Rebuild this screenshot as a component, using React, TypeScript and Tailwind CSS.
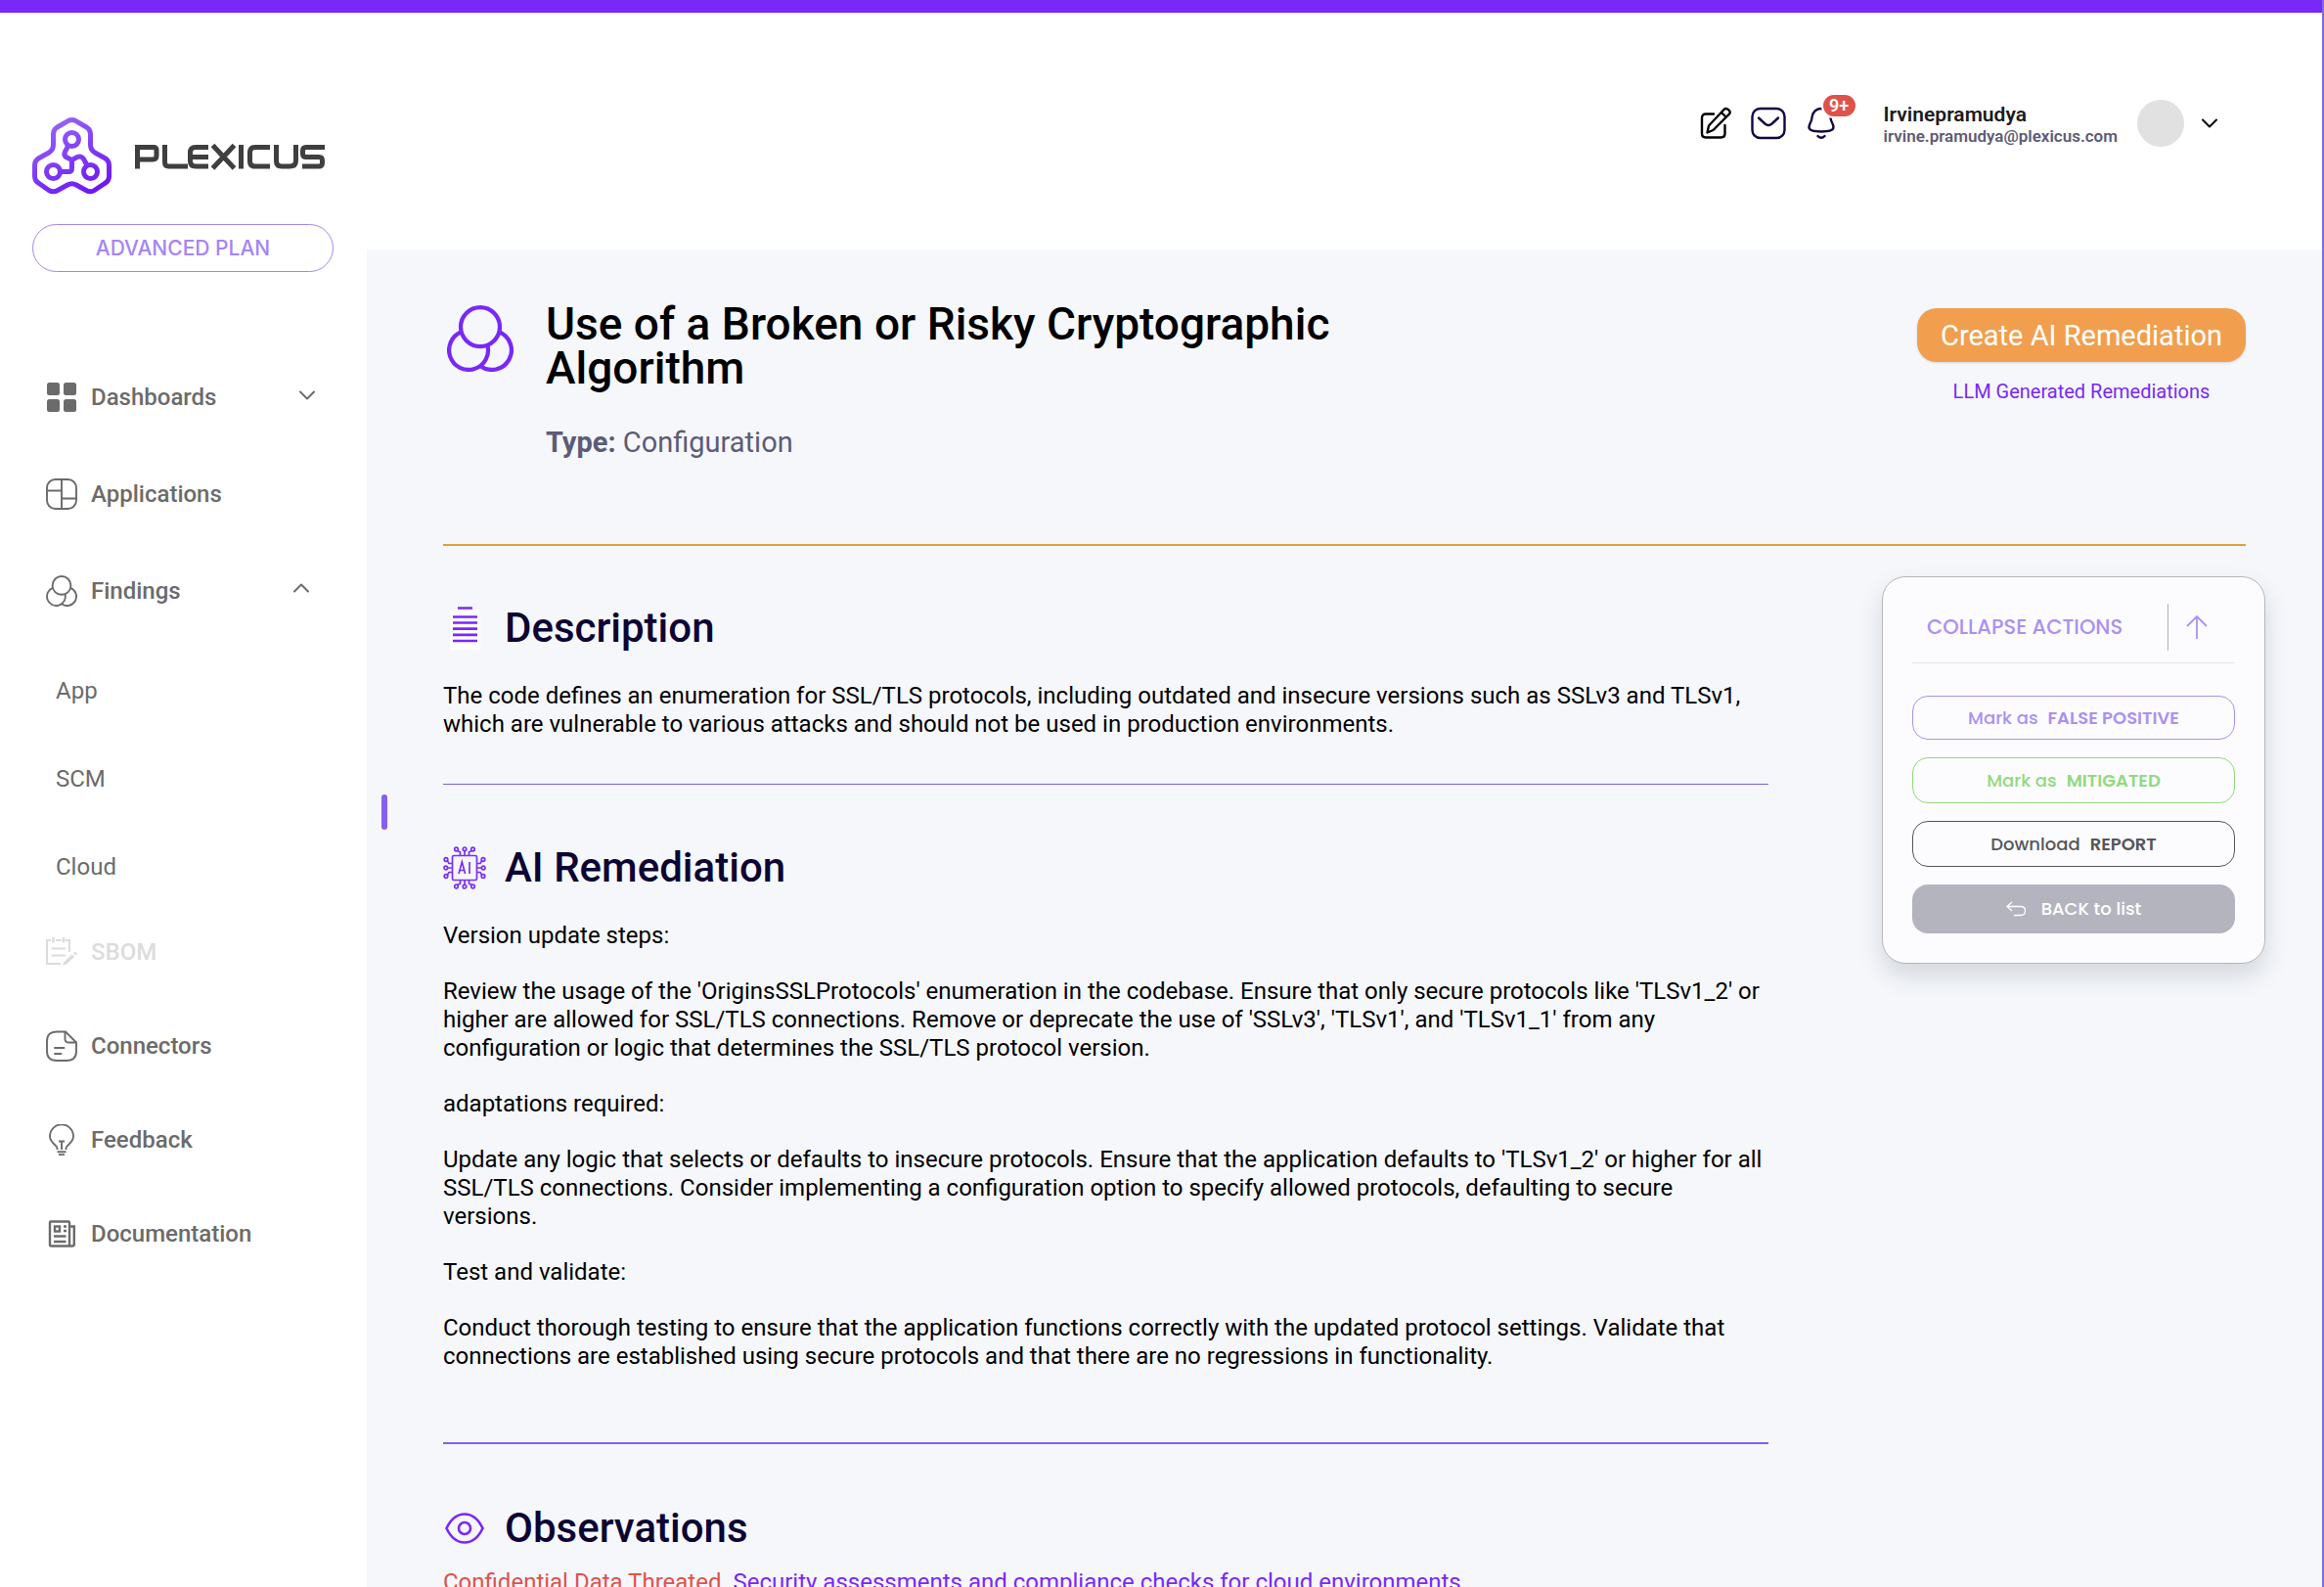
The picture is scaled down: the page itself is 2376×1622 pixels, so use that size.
import React from 'react';

const heading = 'text-[42px] leading-[50px] font-medium text-[#0d0433]';

function Rings({ className, width }: { className: string; width: number }) {
  return (
    <svg className={className} viewBox="0 0 32 32" fill="none" stroke="currentColor" strokeWidth={width}>
      <circle cx="16" cy="10.4" r="9.4" />
      <path d="M6.93 12.87A9.4 9.4 0 1 0 19.47 19.13" />
      <path d="M25.07 12.87A9.4 9.4 0 1 1 16 29.15" />
    </svg>
  );
}

function Logo() {
  return (
    <svg className="h-20 w-[302px]" viewBox="0 0 302 80" fill="none" role="img" aria-label="Plexicus">
      <defs>
        <linearGradient id="mark" x1="20" y1="0" x2="60" y2="80" gradientUnits="userSpaceOnUse">
          <stop offset="0" stopColor="#9a66f8" />
          <stop offset="0.6" stopColor="#7c35f6" />
          <stop offset="1" stopColor="#6f14f4" />
        </linearGradient>
      </defs>
      <g stroke="url(#mark)" strokeWidth="5" strokeLinejoin="round">
        <path d="M36.500 3.600Q40.500 1.500 44.500 3.600L55.500 10Q59.500 12.500 59.500 17V28Q59.500 33 64 36L74 41.500Q78.500 44 78.500 49V60Q78.500 65 74 67.500L63.500 74.500Q59.500 77 55 74.500L45 69Q40.500 66.500 36 69L26 74.500Q21.500 77 17 74.500L7 67.500Q2.500 65 2.500 60V49Q2.500 44 7 41.500L17 36Q21.500 33 21.500 28V17Q21.500 12.500 25.500 10Z" />
        <circle cx="40.500" cy="22.500" r="7" />
        <circle cx="21.500" cy="55.500" r="7" />
        <circle cx="59.500" cy="55.500" r="7" />
        <path d="M36.500 29.500L33.500 35Q31.500 39 35.500 41L40.500 43.500V52Q40.500 55.500 37 55.500H29M40.500 43.500L46 40.500Q50 39 52.500 42.500L56 49" />
      </g>
      <g stroke="#3f3f3f" strokeWidth="5">
        <path d="M107.500 52.500V30.500H124Q127 30.500 127 33.500V39Q127 43 123 43H107" />
        <path d="M134.500 28V46Q134.500 50 138.500 50H158" transform="translate(1 0)" />
        <path d="M180 30.500H167Q161.500 30.500 161.500 36V44.500Q161.500 50 167 50H180M162 40.500H180" />
        <path d="M184.500 28.500L206.500 52M206.500 28.500L184.500 52" />
        <path d="M213.500 28V52.500" />
        <path d="M243 30.500H228Q222.500 30.500 222.500 36V44.500Q222.500 50 228 50H243" />
        <path d="M249.500 28V44.500Q249.500 50 255 50H263Q269.500 50 269.500 44.500V28" />
        <path d="M299 30.500H280Q276.500 30.500 276.500 34V37Q276.500 40.500 280 40.500H293Q296.500 40.500 296.500 44V46.500Q296.500 50 293 50H276" />
      </g>
    </svg>
  );
}

const icon = 'size-8 shrink-0';

function GridIcon() {
  return (
    <svg className={icon} viewBox="0 0 32 32" fill="currentColor">
      <rect x="1" y="1" width="13" height="13" rx="2.500" />
      <rect x="18" y="1" width="13" height="13" rx="2.500" />
      <rect x="1" y="18" width="13" height="13" rx="2.500" />
      <rect x="18" y="18" width="13" height="13" rx="2.500" />
    </svg>
  );
}

function AppsIcon() {
  return (
    <svg className={icon} viewBox="0 0 32 32" fill="none" stroke="currentColor" strokeWidth="1.900">
      <rect x="1" y="1" width="30" height="30" rx="8.500" />
      <path d="M16 1V31M1 12.500H16M16 20.500H31" />
    </svg>
  );
}

function SbomIcon() {
  return (
    <svg className={icon} viewBox="0 0 32 32" fill="none" stroke="currentColor" strokeWidth="2">
      <path d="M5 4H1V28H15M10 4H16M20 4H24V16" />
      <path d="M7.500 1V6.500M18 1V6.500" strokeWidth="2.600" />
      <path d="M5.500 12.500H20M5.500 19.500H20" />
      <path d="M17 30L18.500 26L26.500 18.500L29 21L21 28.500Z" fill="currentColor" stroke="none" />
      <path d="M28 17L29.500 15.500L32 18L30.500 19.500Z" fill="currentColor" stroke="none" />
    </svg>
  );
}

function FileIcon() {
  return (
    <svg className={icon} viewBox="0 0 32 32" fill="none" stroke="currentColor" strokeWidth="1.900" strokeLinecap="round" strokeLinejoin="round">
      <path d="M20 1.500H11Q1 1.500 1 11V21.500Q1 31 11 31H21Q31 31 31 21.500V12.500Z" />
      <path d="M19.500 2V9Q19.500 12.500 23 12.500H30.500M9 18H18.500M9 24H15.500" />
    </svg>
  );
}

function BulbIcon() {
  return (
    <svg className={icon} viewBox="0 0 32 32" fill="none" stroke="currentColor" strokeWidth="1.900">
      <path d="M11.500 26V24.500C11.500 21 4 19.500 4 12.300A12 12 0 0 1 28 12.300C28 19.500 20.500 21 20.500 24.500V26" />
      <path d="M13 17.500H19M16 17.500V26M11.500 28.200H20.500M13 31.200H19" />
    </svg>
  );
}

function NewsIcon() {
  return (
    <svg className={icon} viewBox="0 0 32 32" fill="none" stroke="currentColor" strokeWidth="2.400">
      <path d="M24 28.500V4.500Q24 3.500 23 3.500H5Q4 3.500 4 4.500V27Q4 28.500 5.500 28.500H27Q28.800 28.500 28.800 27V8.500H24.500" />
      <rect x="9" y="8.500" width="5" height="5" />
      <path d="M18 8.500H21M18 13H21M8 18.500H20.500M8 24H20.500" />
    </svg>
  );
}

function Chevron({ up, className }: { up?: boolean; className: string }) {
  return (
    <svg className={className} viewBox="0 0 16 10" fill="none" stroke="currentColor" strokeWidth="2" strokeLinecap="round" strokeLinejoin="round">
      <path d={up ? 'M1 8.500L8 1.500L15 8.500' : 'M1 1.500L8 8.500L15 1.500'} />
    </svg>
  );
}

function NavItem({ label, children, end, className = 'text-[#6b6b6b]' }: { label: string; children: React.ReactNode; end?: React.ReactNode; className?: string }) {
  return (
    <li>
      <a href="#" className={`flex h-9 items-center gap-3.5 pr-4 pl-3.5 ${className}`}>
        {children}
        <span className="flex-1 text-2xl font-medium">{label}</span>
        {end}
      </a>
    </li>
  );
}

function SubItem({ label }: { label: string }) {
  return (
    <li>
      <a href="#" className="block pl-6 text-2xl leading-9 text-[#6b6b6b]">{label}</a>
    </li>
  );
}

function Sidebar() {
  return (
    <aside className="w-[375px] shrink-0 bg-white pr-[34px] pl-[33px]">
      <div className="pt-[107px]">
        <Logo />
      </div>
      <button type="button" className="mt-[29px] h-[49px] w-full rounded-full border border-[#a585f5] text-[21px] font-medium text-[#a585f5] [font-family:Inter,sans-serif]">
        ADVANCED PLAN
      </button>
      <nav className="mt-[110px]">
        <ul className="flex flex-col gap-[63px]">
          <NavItem label="Dashboards" end={<Chevron className="mr-[3px] mb-1 h-2.5 w-4" />}><GridIcon /></NavItem>
          <NavItem label="Applications"><AppsIcon /></NavItem>
          <NavItem label="Findings" end={<Chevron up className="mr-[9px] mb-1.5 h-2.5 w-4" />}><Rings className={icon} width={1.9} /></NavItem>
        </ul>
        <ul className="mt-[66px] flex flex-col gap-[54px]">
          <SubItem label="App" />
          <SubItem label="SCM" />
          <SubItem label="Cloud" />
        </ul>
        <ul className="mt-[51px] flex flex-col gap-[60px]">
          <NavItem label="SBOM" className="text-[#dcdcdc]"><SbomIcon /></NavItem>
          <NavItem label="Connectors"><FileIcon /></NavItem>
          <NavItem label="Feedback"><BulbIcon /></NavItem>
          <NavItem label="Documentation"><NewsIcon /></NavItem>
        </ul>
      </nav>
    </aside>
  );
}

function Header() {
  return (
    <header className="flex h-[242px] items-start justify-end bg-white pt-[89px] pr-[107px]">
      <div className="flex h-12 items-center">
        <button type="button" aria-label="Compose" className="mr-[18px]">
          <svg className="size-9" viewBox="0 0 36 36" fill="none" stroke="#000" strokeWidth="2.400" strokeLinecap="round" strokeLinejoin="round">
            <path d="M16 8.500H8Q4 8.500 4 12.500V28.500Q4 32.500 8 32.500H23.500Q27.500 32.500 27.500 28.500V20" />
            <path d="M9.500 27.500L11 20.500L26.500 4Q28.500 2 31.500 4.500Q34 7 31.500 9L15.500 25ZM24 7L28.500 11.500" />
          </svg>
        </button>
        <button type="button" aria-label="Messages" className="mr-[18px]">
          <svg className="size-9" viewBox="0 0 36 36" fill="none" stroke="#12073f" strokeWidth="2.400" strokeLinecap="round" strokeLinejoin="round">
            <rect x="1.500" y="3" width="33" height="30" rx="8" />
            <path d="M8 12.500L14.500 18.500Q18 21.500 21.500 18.500L28 12.500" />
          </svg>
        </button>
        <button type="button" aria-label="Notifications" className="relative mr-[46px]">
          <svg className="size-9" viewBox="0 0 36 36" fill="none" stroke="#12073f" strokeWidth="2.400" strokeLinecap="round" strokeLinejoin="round">
            <path d="M18 3C12.500 3 9 7 8.500 12C8.200 17 5.500 18.500 5.500 22C5.500 25 9 26.500 18 26.500C27 26.500 30.500 25 30.500 22C30.500 18.500 27.800 17 27.500 12C27 7 23.500 3 18 3Z" />
            <path d="M14.500 31Q18 34.500 21.500 31" />
          </svg>
          <span className="absolute -top-[11px] left-5 flex h-[22px] w-[33px] items-center justify-center rounded-full bg-[#df524c] text-lg font-semibold text-white ring-2 ring-white">9+</span>
        </button>
        <div className="mr-5 pt-0.5">
          <p className="text-[21px] leading-6 font-semibold text-[#1b1b1b]">Irvinepramudya</p>
          <p className="text-[17px] leading-5 font-semibold text-[#5d5b75]">irvine.pramudya@plexicus.com</p>
        </div>
        <button type="button" aria-label="Account menu" className="flex items-center gap-[18px]">
          <span className="size-12 rounded-full bg-[#e1e1e1]" />
          <Chevron className="h-2.5 w-4" />
        </button>
      </div>
    </header>
  );
}

function Chip() {
  return (
    <svg className="size-11" viewBox="0 0 44 44" fill="none" stroke="#7a2ff5" strokeWidth="1.700">
      <rect x="9.500" y="9.500" width="25" height="25" rx="1.500" />
      <path d="M16 28L19.300 16L22.600 28M17 24.500H21.500M27 16V28" />
      {[0, 90, 180, 270].map((angle) => (
        <g key={angle} transform={`rotate(${angle} 22 22)`}>
          <path d="M17.500 9.500V6L14.800 4.500M22 9.500V4.500M26.500 9.500V6L29.200 4.500" />
          <circle cx="13.500" cy="3" r="1.800" />
          <circle cx="22" cy="2.800" r="1.800" />
          <circle cx="30.500" cy="3" r="1.800" />
        </g>
      ))}
    </svg>
  );
}

function SectionTitle({ children, title }: { children: React.ReactNode; title: string }) {
  return (
    <div className="flex items-center gap-[19px]">
      <span className="flex size-11 items-center justify-center">{children}</span>
      <h2 className={heading}>{title}</h2>
    </div>
  );
}

const steps = [
  'Version update steps:',
  "Review the usage of the 'OriginsSSLProtocols' enumeration in the codebase. Ensure that only secure protocols like 'TLSv1_2' or higher are allowed for SSL/TLS connections. Remove or deprecate the use of 'SSLv3', 'TLSv1', and 'TLSv1_1' from any configuration or logic that determines the SSL/TLS protocol version.",
  'adaptations required:',
  "Update any logic that selects or defaults to insecure protocols. Ensure that the application defaults to 'TLSv1_2' or higher for all SSL/TLS connections. Consider implementing a configuration option to specify allowed protocols, defaulting to secure versions.",
  'Test and validate:',
  'Conduct thorough testing to ensure that the application functions correctly with the updated protocol settings. Validate that connections are established using secure protocols and that there are no regressions in functionality.',
];

const action = 'flex w-full items-center justify-center gap-2.5 rounded-2xl border';

function Actions() {
  return (
    <aside className="mt-[31px] -mr-5 w-[392px] shrink-0 self-start rounded-3xl border border-[#b6b7bd] bg-[#fcfcfe] px-[30px] pt-[27px] pb-[30px] text-lg font-medium shadow-[0_12px_24px_rgba(60,70,90,0.18)] [font-family:Poppins,Inter,sans-serif]">
      <div className="flex items-center border-b border-[#e6e6ea] pb-3 pl-[15px] text-[#ab90f3]">
        <h3 className="flex-1 text-[21px]">COLLAPSE ACTIONS</h3>
        <button type="button" aria-label="Collapse" className="flex h-12 w-[69px] items-center border-l border-[#b0b1b6] pl-[18px]">
          <svg className="size-6" viewBox="0 0 24 24" fill="none" stroke="currentColor" strokeWidth="1.800">
            <path d="M11 24V1M1 11L11 1L21 11" />
          </svg>
        </button>
      </div>
      <div className="mt-[33px] flex flex-col gap-[18px]">
        <button type="button" className={`${action} h-[45px] border-[#ab90f3] text-[#ab90f3]`}>Mark as <b className="font-semibold">FALSE POSITIVE</b></button>
        <button type="button" className={`${action} h-[47px] border-[#92d97f] text-[#92d97f]`}>Mark as <b className="font-semibold">MITIGATED</b></button>
        <button type="button" className={`${action} h-[47px] border-[#55565a] text-[#55565a]`}>Download <b className="font-semibold">REPORT</b></button>
        <button type="button" className={`${action} h-[50px] border-transparent bg-[#b4b4bf] text-white`}>
          <svg className="mr-1.5 h-4 w-5" viewBox="0 0 20 16" fill="none" stroke="currentColor" strokeWidth="1.300">
            <path d="M6 1L1 5.500L6 10M1 5.500H15Q19.500 5.500 19.500 10Q19.500 14.500 15 14.500H8" />
          </svg>
          BACK to list
        </button>
      </div>
    </aside>
  );
}

export default function App() {
  return (
    <div className="h-screen overflow-hidden border-r-2 border-[#7c6fd8] bg-white text-black [font-family:Roboto,sans-serif]">
      <div className="h-[13px] bg-[#7a28f7]" />
      <div className="flex h-full">
        <Sidebar />
        <div className="min-w-0 flex-1">
          <Header />
          <div className="flex bg-[#f5f7fb]">
            <div className="flex w-[78px] shrink-0 pt-[557px] pl-[15px]">
              <span className="h-9 w-1.5 rounded-full bg-[#8560f0]" />
            </div>
            <main className="min-w-0 flex-1 pr-[78px]">
              <div className="flex items-start pt-[52px]">
                <span className="mt-[5px] ml-1 w-[101px] shrink-0"><Rings className="size-[68px] text-[#7a28f7]" width={2} /></span>
                <div className="flex-1 pt-0.5">
                  <h1 className="max-w-[860px] text-[46px] leading-[45px] font-medium">Use of a Broken or Risky Cryptographic Algorithm</h1>
                  <p className="mt-[35px] text-[29px] leading-9 text-[#5d5b75]"><b className="font-bold">Type:</b> Configuration</p>
                </div>
                <div className="flex flex-col items-center pt-2">
                  <button type="button" className="h-[55px] rounded-[20px] bg-[#f19f4f] px-6 text-[29px] leading-9 text-white shadow-sm">Create AI Remediation</button>
                  <a href="#" className="mt-4 text-xl leading-7 text-[#7a28f7]">LLM Generated Remediations</a>
                </div>
              </div>
              <hr className="mt-[86px] border-t-2 border-[#e0a03c]" />
              <div className="flex justify-between">
                <div className="w-[1355px]">
                  <section className="border-b border-[#7f60ea] pt-[59px] pb-[46px]">
                    <SectionTitle title="Description">
                      <svg className="h-[46px] w-8" viewBox="-1 0 32 46">
                        <path d="M0 4.500H31V45.500H0Z" fill="#fff" />
                        <path d="M8 2.500H23M3 11.500H28M3 17.500H28M3 23.700H28M3 29.800H28M3 36H28" stroke="#7a28f7" strokeWidth="2.700" />
                      </svg>
                    </SectionTitle>
                    <p className="mt-[30px] text-2xl leading-[29px]">
                      The code defines an enumeration for SSL/TLS protocols, including outdated and insecure versions such as SSLv3 and TLSv1, which are vulnerable to various attacks and should not be used in production environments.
                    </p>
                  </section>
                  <section className="border-b-2 border-[#8560f0] pt-[60px] pb-[73px]">
                    <SectionTitle title="AI Remediation"><Chip /></SectionTitle>
                    <div className="mt-[30px] flex flex-col gap-7 text-2xl leading-[29px]">
                      {steps.map((step) => <p key={step}>{step}</p>)}
                    </div>
                  </section>
                  <section className="pt-[61px] pb-10">
                    <SectionTitle title="Observations">
                      <svg className="h-8 w-10" viewBox="0 0 40 32" fill="none" stroke="#7a28f7" strokeWidth="2.600">
                        <path d="M1.500 16C6 6.500 12.500 1.500 20 1.500S34 6.500 38.500 16C34 25.500 27.500 30.500 20 30.500S6 25.500 1.500 16Z" />
                        <circle cx="20" cy="16" r="6" />
                      </svg>
                    </SectionTitle>
                    <p className="mt-4 text-2xl leading-[29px] text-[#7a28f7]">
                      <span className="mr-3 text-[#df524c]">Confidential Data Threated</span>
                      Security assessments and compliance checks for cloud environments
                    </p>
                  </section>
                </div>
                <Actions />
              </div>
            </main>
          </div>
        </div>
      </div>
    </div>
  );
}
